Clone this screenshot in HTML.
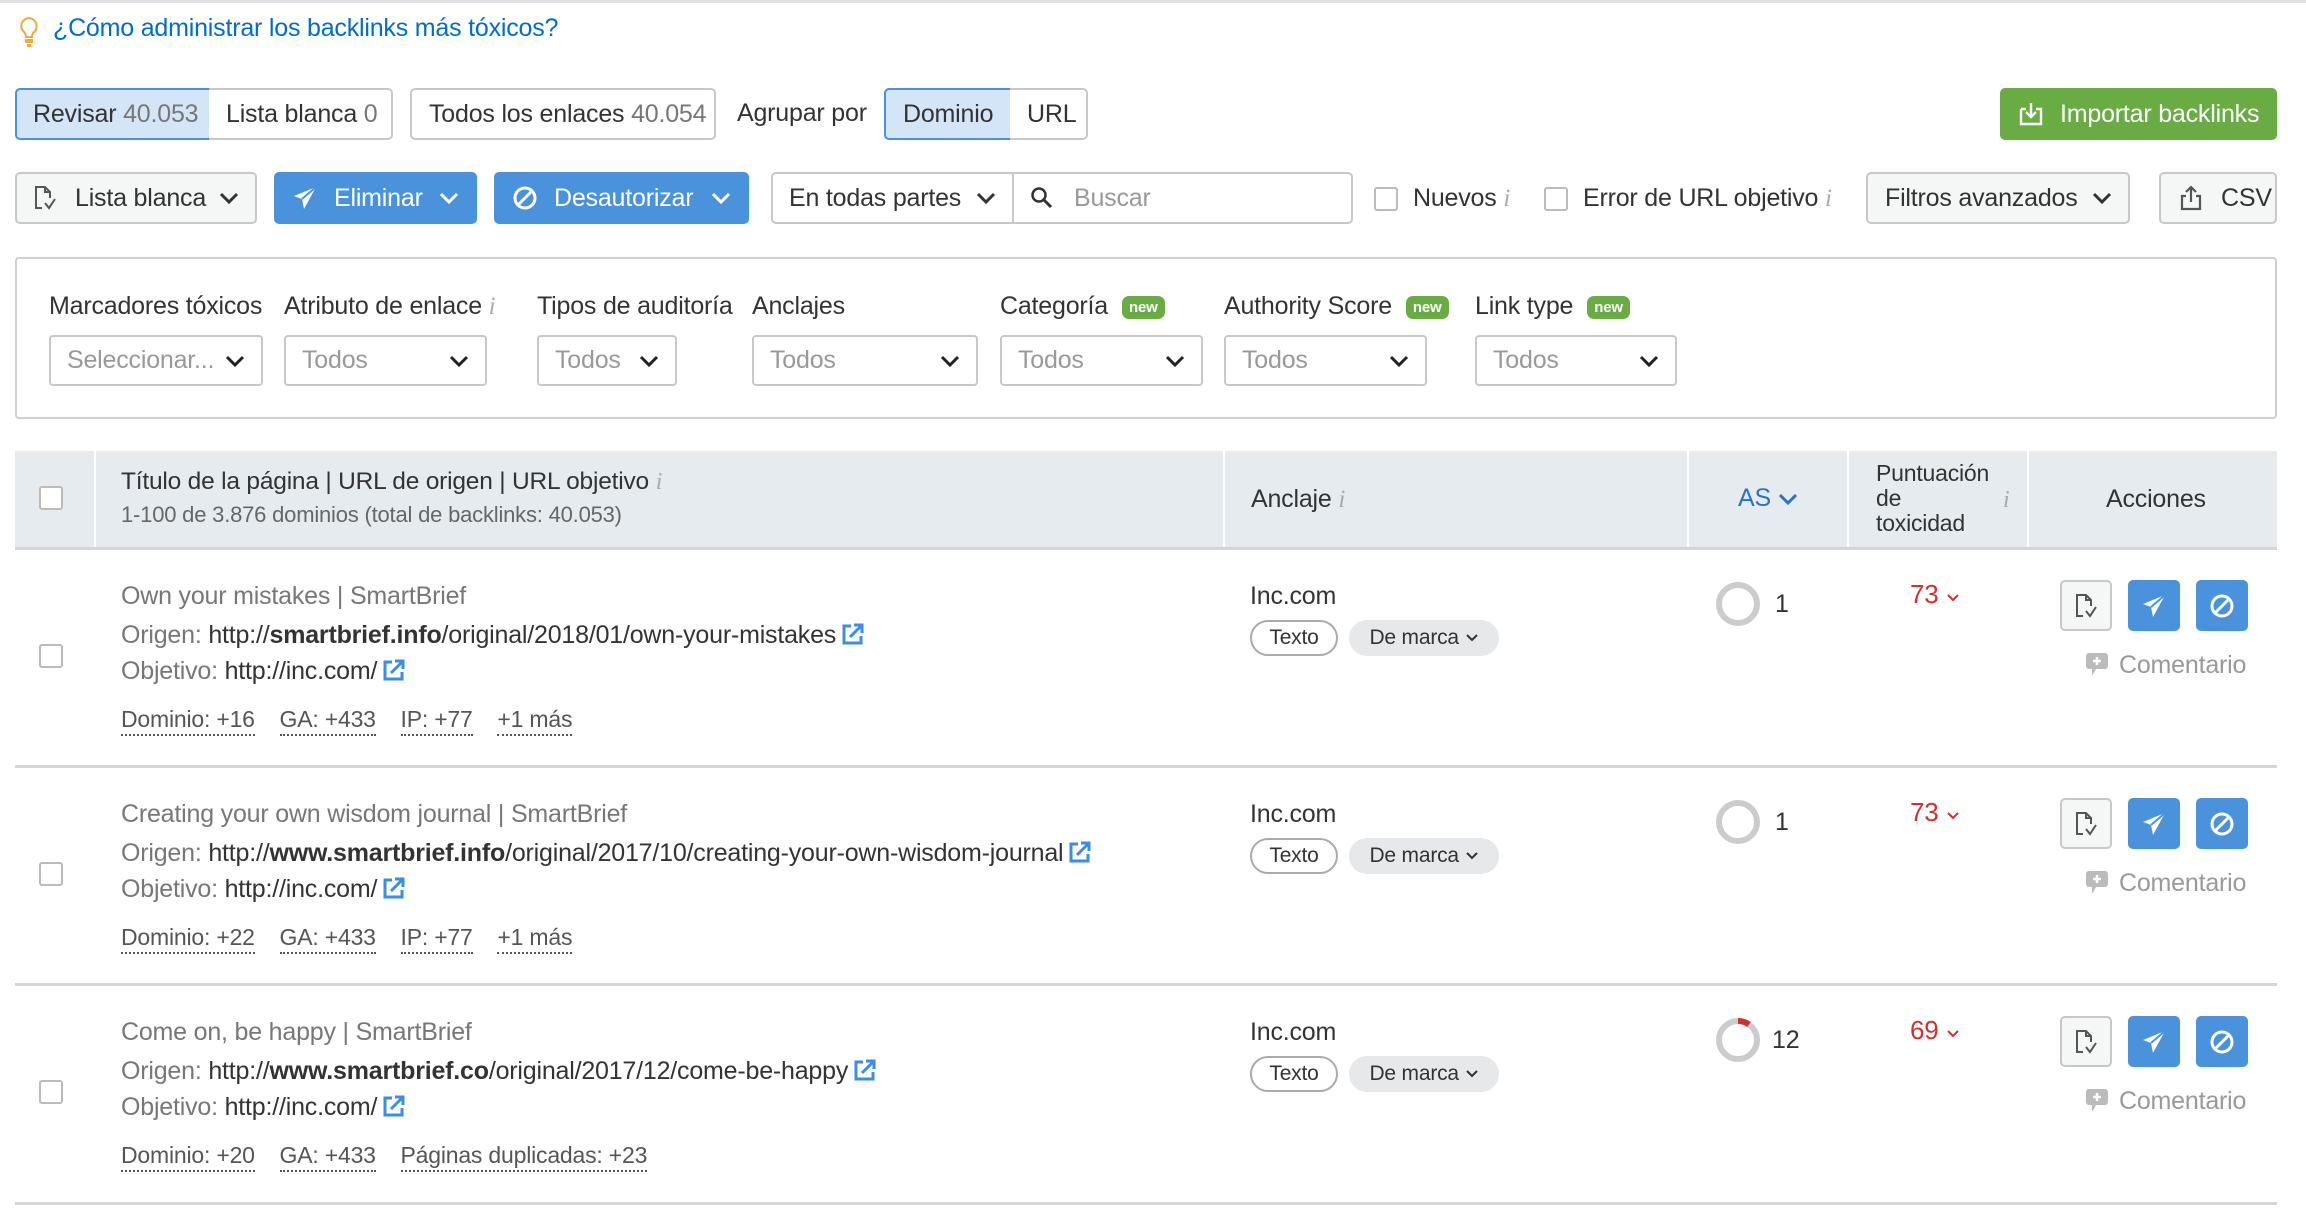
<!DOCTYPE html>
<html><head><meta charset="utf-8"><style>
*{box-sizing:border-box;margin:0;padding:0}
body{width:2306px;height:1210px;background:#fff;font-family:"Liberation Sans",sans-serif;color:#333;font-size:24px;position:relative;overflow:hidden;letter-spacing:-0.2px}
.a{position:absolute;white-space:nowrap}
.btn{position:absolute;border:2px solid #c8c8c8;border-radius:5px;background:#f5f6f6;display:flex;align-items:center;font-size:25px;color:#333}
.blue{background:#4a93dc;border-color:#4a93dc;color:#fff}
.sel{position:absolute;border:2px solid #c8c8c8;border-radius:4px;background:#fff;height:51px;display:flex;align-items:center;padding-left:16px;color:#999;font-size:25px}
.chev{position:absolute;right:16px;top:50%;margin-top:-7px}
.lbl{position:absolute;font-size:25px;color:#333}
.new{display:inline-block;background:#6aac44;color:#fff;font-size:15px;border-radius:7px;padding:3px 7px;vertical-align:middle;margin-left:14px;font-weight:bold}
.cb{position:absolute;width:24px;height:24px;border:2px solid #bbb;border-radius:3px;background:#fff}
.hdr{position:absolute;top:451px;height:98px;background:#e5ebef}
.g{color:#777}
.dot{border-bottom:2px dotted #555;padding-bottom:2px}
.sep{position:absolute;left:15px;width:2262px;height:3px;background:#d6d6d6}
.pill{position:absolute;height:36px;border-radius:18px;font-size:21px;display:flex;align-items:center;justify-content:center}
.ab{position:absolute;width:52px;height:51px;border-radius:5px;display:flex;align-items:center;justify-content:center}
.row{font-size:25px}
.ext{display:inline-block;vertical-align:-2px;margin-left:6px}
</style></head><body>
<div class="a" style="left:0;top:0;width:2306px;height:3px;background:#e2e2e6"></div>
<svg class="a" style="left:18px;top:16px" width="22" height="32" viewBox="0 0 22 32"><path d="M11 2a8 8 0 0 0-5 14c1 1 2 3 2 5h6c0-2 1-4 2-5A8 8 0 0 0 11 2z" fill="none" stroke="#f2a93b" stroke-width="2"/><rect x="7" y="23" width="8" height="4" fill="#f2a93b"/><rect x="9" y="28" width="4" height="3" fill="#f2a93b"/></svg>
<div class="a" style="left:53px;top:14px;font-size:25px;color:#006dca">¿Cómo administrar los backlinks más tóxicos?</div>

<div class="btn" style="left:15px;top:88px;width:196px;height:52px;background:#d3e5f7;border-color:#4a93dc;padding-left:16px;border-radius:5px 0 0 5px">Revisar&nbsp;<span class="g">40.053</span></div>
<div class="btn" style="left:209px;top:88px;width:184px;height:52px;background:#fff;padding-left:17px;border-radius:0 5px 5px 0;border-left:none">Lista blanca&nbsp;<span class="g">0</span></div>
<div class="btn" style="left:410px;top:88px;width:306px;height:52px;background:#fff;padding-left:17px">Todos los enlaces&nbsp;<span class="g">40.054</span></div>
<div class="a" style="left:737px;top:99px;font-size:25px">Agrupar por</div>
<div class="btn" style="left:884px;top:88px;width:128px;height:52px;background:#d3e5f7;border-color:#4a93dc;padding-left:17px;border-radius:5px 0 0 5px">Dominio</div>
<div class="btn" style="left:1010px;top:88px;width:78px;height:52px;background:#fff;padding-left:17px;border-radius:0 5px 5px 0;border-left:none">URL</div>
<div class="btn" style="left:2000px;top:88px;width:277px;height:52px;background:#6aac44;border-color:#6aac44;color:#fff;padding-left:16px"><svg width="26" height="26" viewBox="0 0 26 26" style="margin-right:16px"><path d="M3 8v15h20V8h-5M8 8H3" fill="none" stroke="#fff" stroke-width="2.4"/><path d="M13 2v14M8 11l5 5 5-5" fill="none" stroke="#fff" stroke-width="2.4"/></svg>Importar backlinks</div>

<div class="btn" style="left:15px;top:172px;width:242px;height:52px;padding-left:16px"><svg width="24" height="28" viewBox="0 0 24 28" style="margin-right:18px"><path d="M9 24H3V3h9l5 5v6M12 3v5h5M12 19l4 5 6-9" fill="none" stroke="#555" stroke-width="2"/></svg>Lista blanca<svg class="chev" width="20" height="14" viewBox="0 0 20 14"><path d="M2 3l8 8 8-8" fill="none" stroke="#333" stroke-width="3"/></svg></div>
<div class="btn blue" style="left:274px;top:172px;width:203px;height:52px;padding-left:16px"><svg width="26" height="26" viewBox="0 0 26 26" style="margin-right:16px"><path d="M24 2L2 11l8 3 2 10z" fill="#fff"/><path d="M24 2L10 14" stroke="#4a93dc" stroke-width="2"/></svg>Eliminar<svg class="chev" width="20" height="14" viewBox="0 0 20 14"><path d="M2 3l8 8 8-8" fill="none" stroke="#fff" stroke-width="3"/></svg></div>
<div class="btn blue" style="left:494px;top:172px;width:255px;height:52px;padding-left:16px"><svg width="26" height="26" viewBox="0 0 26 26" style="margin-right:16px"><circle cx="13" cy="13" r="10" fill="none" stroke="#fff" stroke-width="3"/><path d="M7 19L19 7" stroke="#fff" stroke-width="3"/></svg>Desautorizar<svg class="chev" width="20" height="14" viewBox="0 0 20 14"><path d="M2 3l8 8 8-8" fill="none" stroke="#fff" stroke-width="3"/></svg></div>
<div class="btn" style="left:771px;top:172px;width:243px;height:52px;background:#fff;padding-left:16px;border-radius:5px 0 0 5px">En todas partes<svg class="chev" width="20" height="14" viewBox="0 0 20 14"><path d="M2 3l8 8 8-8" fill="none" stroke="#333" stroke-width="3"/></svg></div>
<div class="btn" style="left:1012px;top:172px;width:341px;height:52px;background:#fff;padding-left:16px;border-radius:0 5px 5px 0;color:#999"><svg width="24" height="24" viewBox="0 0 24 24" style="margin-right:20px"><circle cx="9" cy="9" r="6.5" fill="none" stroke="#333" stroke-width="2.5"/><path d="M14 14l7 7" stroke="#333" stroke-width="3"/></svg>Buscar</div>
<div class="cb" style="left:1374px;top:187px"></div>
<div class="a" style="left:1413px;top:184px;font-size:25px">Nuevos <i style="color:#aaa;font-family:'Liberation Serif'">i</i></div>
<div class="cb" style="left:1544px;top:187px"></div>
<div class="a" style="left:1583px;top:184px;font-size:25px">Error de URL objetivo <i style="color:#aaa;font-family:'Liberation Serif'">i</i></div>
<div class="btn" style="left:1866px;top:172px;width:264px;height:52px;padding-left:17px">Filtros avanzados<svg class="chev" width="20" height="14" viewBox="0 0 20 14"><path d="M2 3l8 8 8-8" fill="none" stroke="#333" stroke-width="3"/></svg></div>
<div class="btn" style="left:2159px;top:172px;width:118px;height:52px;padding-left:18px"><svg width="24" height="28" viewBox="0 0 24 28" style="margin-right:18px"><path d="M7 12H3v13h18V12h-4M12 3v15M7 8l5-5 5 5" fill="none" stroke="#555" stroke-width="2.2"/></svg>CSV</div>

<div class="a" style="left:15px;top:257px;width:2262px;height:162px;border:2px solid #d0d0d0;border-radius:4px"></div>
<div class="lbl" style="left:49px;top:292px">Marcadores tóxicos</div>
<div class="lbl" style="left:284px;top:292px">Atributo de enlace <i style="color:#aaa;font-family:'Liberation Serif'">i</i></div>
<div class="lbl" style="left:537px;top:292px">Tipos de auditoría</div>
<div class="lbl" style="left:752px;top:292px">Anclajes</div>
<div class="lbl" style="left:1000px;top:292px">Categoría<span class="new">new</span></div>
<div class="lbl" style="left:1224px;top:292px">Authority Score<span class="new">new</span></div>
<div class="lbl" style="left:1475px;top:292px">Link type<span class="new">new</span></div>
<div class="sel" style="left:49px;top:335px;width:214px">Seleccionar...<svg class="chev" width="20" height="14" viewBox="0 0 20 14"><path d="M2 3l8 8 8-8" fill="none" stroke="#222" stroke-width="3"/></svg></div>
<div class="sel" style="left:284px;top:335px;width:203px">Todos<svg class="chev" width="20" height="14" viewBox="0 0 20 14"><path d="M2 3l8 8 8-8" fill="none" stroke="#222" stroke-width="3"/></svg></div>
<div class="sel" style="left:537px;top:335px;width:140px">Todos<svg class="chev" width="20" height="14" viewBox="0 0 20 14"><path d="M2 3l8 8 8-8" fill="none" stroke="#222" stroke-width="3"/></svg></div>
<div class="sel" style="left:752px;top:335px;width:226px">Todos<svg class="chev" width="20" height="14" viewBox="0 0 20 14"><path d="M2 3l8 8 8-8" fill="none" stroke="#222" stroke-width="3"/></svg></div>
<div class="sel" style="left:1000px;top:335px;width:203px">Todos<svg class="chev" width="20" height="14" viewBox="0 0 20 14"><path d="M2 3l8 8 8-8" fill="none" stroke="#222" stroke-width="3"/></svg></div>
<div class="sel" style="left:1224px;top:335px;width:203px">Todos<svg class="chev" width="20" height="14" viewBox="0 0 20 14"><path d="M2 3l8 8 8-8" fill="none" stroke="#222" stroke-width="3"/></svg></div>
<div class="sel" style="left:1475px;top:335px;width:202px">Todos<svg class="chev" width="20" height="14" viewBox="0 0 20 14"><path d="M2 3l8 8 8-8" fill="none" stroke="#222" stroke-width="3"/></svg></div>

<div class="hdr" style="left:15px;width:79px"></div>
<div class="hdr" style="left:96px;width:1127px"></div>
<div class="hdr" style="left:1225px;width:462px"></div>
<div class="hdr" style="left:1689px;width:158px"></div>
<div class="hdr" style="left:1849px;width:178px"></div>
<div class="hdr" style="left:2029px;width:248px"></div>
<div class="a" style="left:15px;top:547px;width:2262px;height:3px;background:#d2d6d9"></div>
<div class="cb" style="left:39px;top:486px"></div>
<div class="a" style="left:121px;top:468px;font-size:24.5px">Título de la página | URL de origen | URL objetivo <i style="color:#aaa;font-family:'Liberation Serif'">i</i></div>
<div class="a" style="left:121px;top:502px;font-size:22px;color:#666">1-100 de 3.876 dominios (total de backlinks: 40.053)</div>
<div class="a" style="left:1251px;top:485px;font-size:25px">Anclaje <i style="color:#aaa;font-family:'Liberation Serif'">i</i></div>
<div class="a" style="left:1738px;top:484px;color:#2a72c4;font-size:25px">AS <svg width="20" height="13" viewBox="0 0 20 13"><path d="M2 2l8 8 8-8" fill="none" stroke="#2a72c4" stroke-width="3"/></svg></div>
<div class="a" style="left:1876px;top:461px;line-height:25px;font-size:23px">Puntuación<br>de<br>toxicidad</div>
<i class="a" style="left:2003px;top:487px;color:#aaa;font-family:'Liberation Serif'">i</i>
<div class="a" style="left:2106px;top:485px;font-size:25px">Acciones</div>

<div class="sep" style="top:765px"></div>
<div class="sep" style="top:983px"></div>
<div class="sep" style="top:1202px"></div>

<div class="row">
<div class="cb" style="left:39px;top:644px"></div>
<div class="a g" style="left:121px;top:582px">Own your mistakes | SmartBrief</div>
<div class="a" style="left:121px;top:621px"><span class="g">Origen:</span> http://<b>smartbrief.info</b>/original/2018/01/own-your-mistakes<svg class="ext" width="22" height="22" viewBox="0 0 22 22"><path d="M9 3H2v17h17v-7" fill="none" stroke="#3a8ee6" stroke-width="3"/><path d="M8 14L19 3M12 2h8v8" fill="none" stroke="#3a8ee6" stroke-width="3"/></svg></div>
<div class="a" style="left:121px;top:657px"><span class="g">Objetivo:</span> http://inc.com/<svg class="ext" width="22" height="22" viewBox="0 0 22 22"><path d="M9 3H2v17h17v-7" fill="none" stroke="#3a8ee6" stroke-width="3"/><path d="M8 14L19 3M12 2h8v8" fill="none" stroke="#3a8ee6" stroke-width="3"/></svg></div>
<div class="a" style="left:121px;top:706px;font-size:23px;color:#555"><span class="dot">Dominio: +16</span>&nbsp;&nbsp;&nbsp;&nbsp;<span class="dot">GA: +433</span>&nbsp;&nbsp;&nbsp;&nbsp;<span class="dot">IP: +77</span>&nbsp;&nbsp;&nbsp;&nbsp;<span class="dot">+1 más</span></div>

<div class="cb" style="left:39px;top:862px"></div>
<div class="a g" style="left:121px;top:800px">Creating your own wisdom journal | SmartBrief</div>
<div class="a" style="left:121px;top:839px"><span class="g">Origen:</span> http://<b>www.smartbrief.info</b>/original/2017/10/creating-your-own-wisdom-journal<svg class="ext" width="22" height="22" viewBox="0 0 22 22"><path d="M9 3H2v17h17v-7" fill="none" stroke="#3a8ee6" stroke-width="3"/><path d="M8 14L19 3M12 2h8v8" fill="none" stroke="#3a8ee6" stroke-width="3"/></svg></div>
<div class="a" style="left:121px;top:875px"><span class="g">Objetivo:</span> http://inc.com/<svg class="ext" width="22" height="22" viewBox="0 0 22 22"><path d="M9 3H2v17h17v-7" fill="none" stroke="#3a8ee6" stroke-width="3"/><path d="M8 14L19 3M12 2h8v8" fill="none" stroke="#3a8ee6" stroke-width="3"/></svg></div>
<div class="a" style="left:121px;top:924px;font-size:23px;color:#555"><span class="dot">Dominio: +22</span>&nbsp;&nbsp;&nbsp;&nbsp;<span class="dot">GA: +433</span>&nbsp;&nbsp;&nbsp;&nbsp;<span class="dot">IP: +77</span>&nbsp;&nbsp;&nbsp;&nbsp;<span class="dot">+1 más</span></div>

<div class="cb" style="left:39px;top:1080px"></div>
<div class="a g" style="left:121px;top:1018px">Come on, be happy | SmartBrief</div>
<div class="a" style="left:121px;top:1057px"><span class="g">Origen:</span> http://<b>www.smartbrief.co</b>/original/2017/12/come-be-happy<svg class="ext" width="22" height="22" viewBox="0 0 22 22"><path d="M9 3H2v17h17v-7" fill="none" stroke="#3a8ee6" stroke-width="3"/><path d="M8 14L19 3M12 2h8v8" fill="none" stroke="#3a8ee6" stroke-width="3"/></svg></div>
<div class="a" style="left:121px;top:1093px"><span class="g">Objetivo:</span> http://inc.com/<svg class="ext" width="22" height="22" viewBox="0 0 22 22"><path d="M9 3H2v17h17v-7" fill="none" stroke="#3a8ee6" stroke-width="3"/><path d="M8 14L19 3M12 2h8v8" fill="none" stroke="#3a8ee6" stroke-width="3"/></svg></div>
<div class="a" style="left:121px;top:1142px;font-size:23px;color:#555"><span class="dot">Dominio: +20</span>&nbsp;&nbsp;&nbsp;&nbsp;<span class="dot">GA: +433</span>&nbsp;&nbsp;&nbsp;&nbsp;<span class="dot">Páginas duplicadas: +23</span></div>

<div class="a" style="left:1250px;top:582px">Inc.com</div>
<div class="pill" style="left:1250px;top:620px;width:88px;border:2px solid #aaa">Texto</div>
<div class="pill" style="left:1349px;top:620px;width:150px;background:#e6e8ea">De marca&nbsp;<svg width="14" height="10" viewBox="0 0 14 10"><path d="M2 2l5 5 5-5" fill="none" stroke="#333" stroke-width="2"/></svg></div>
<svg class="a" style="left:1715px;top:581px" width="46" height="46"><circle cx="23" cy="23" r="19" fill="none" stroke="#ccc" stroke-width="6"/></svg>
<div class="a" style="left:1775px;top:590px">1</div>
<div class="a" style="left:1910px;top:579px;color:#d1302f;font-size:26px">73 <svg width="14" height="10" viewBox="0 0 14 10"><path d="M2 2l5 5 5-5" fill="none" stroke="#d1302f" stroke-width="2"/></svg></div>

<div class="a" style="left:1250px;top:800px">Inc.com</div>
<div class="pill" style="left:1250px;top:838px;width:88px;border:2px solid #aaa">Texto</div>
<div class="pill" style="left:1349px;top:838px;width:150px;background:#e6e8ea">De marca&nbsp;<svg width="14" height="10" viewBox="0 0 14 10"><path d="M2 2l5 5 5-5" fill="none" stroke="#333" stroke-width="2"/></svg></div>
<svg class="a" style="left:1715px;top:799px" width="46" height="46"><circle cx="23" cy="23" r="19" fill="none" stroke="#ccc" stroke-width="6"/></svg>
<div class="a" style="left:1775px;top:808px">1</div>
<div class="a" style="left:1910px;top:797px;color:#d1302f;font-size:26px">73 <svg width="14" height="10" viewBox="0 0 14 10"><path d="M2 2l5 5 5-5" fill="none" stroke="#d1302f" stroke-width="2"/></svg></div>

<div class="a" style="left:1250px;top:1018px">Inc.com</div>
<div class="pill" style="left:1250px;top:1056px;width:88px;border:2px solid #aaa">Texto</div>
<div class="pill" style="left:1349px;top:1056px;width:150px;background:#e6e8ea">De marca&nbsp;<svg width="14" height="10" viewBox="0 0 14 10"><path d="M2 2l5 5 5-5" fill="none" stroke="#333" stroke-width="2"/></svg></div>
<svg class="a" style="left:1715px;top:1017px" width="46" height="46"><circle cx="23" cy="23" r="19" fill="none" stroke="#ccc" stroke-width="6"/><path d="M23 4a19 19 0 0 1 11 3.5" fill="none" stroke="#d1302f" stroke-width="6"/></svg>
<div class="a" style="left:1772px;top:1026px">12</div>
<div class="a" style="left:1910px;top:1015px;color:#d1302f;font-size:26px">69 <svg width="14" height="10" viewBox="0 0 14 10"><path d="M2 2l5 5 5-5" fill="none" stroke="#d1302f" stroke-width="2"/></svg></div>
</div>

<div class="ab" style="left:2060px;top:580px;border:2px solid #c8c8c8;background:#f5f6f6"><svg width="24" height="28" viewBox="0 0 24 28"><path d="M9 24H3V3h9l5 5v6M12 3v5h5M12 19l4 5 6-9" fill="none" stroke="#555" stroke-width="2"/></svg></div>
<div class="ab" style="left:2128px;top:580px;background:#4a93dc"><svg width="26" height="26" viewBox="0 0 26 26"><path d="M24 2L2 11l8 3 2 10z" fill="#fff"/><path d="M24 2L10 14" stroke="#4a93dc" stroke-width="2"/></svg></div>
<div class="ab" style="left:2196px;top:580px;background:#4a93dc"><svg width="26" height="26" viewBox="0 0 26 26"><circle cx="13" cy="13" r="10" fill="none" stroke="#fff" stroke-width="3"/><path d="M7 19L19 7" stroke="#fff" stroke-width="3"/></svg></div>
<div class="a" style="left:2085px;top:651px;color:#999;font-size:25px"><svg width="24" height="28" viewBox="0 0 24 28" style="vertical-align:-6px;margin-right:10px"><path d="M4 2h16a3 3 0 0 1 3 3v10a3 3 0 0 1-3 3H11l-4 7v-7H4a3 3 0 0 1-3-3V5a3 3 0 0 1 3-3z" fill="#bbb"/><path d="M12 6v8M8 10h8" stroke="#fff" stroke-width="2.5"/></svg>Comentario</div>

<div class="ab" style="left:2060px;top:798px;border:2px solid #c8c8c8;background:#f5f6f6"><svg width="24" height="28" viewBox="0 0 24 28"><path d="M9 24H3V3h9l5 5v6M12 3v5h5M12 19l4 5 6-9" fill="none" stroke="#555" stroke-width="2"/></svg></div>
<div class="ab" style="left:2128px;top:798px;background:#4a93dc"><svg width="26" height="26" viewBox="0 0 26 26"><path d="M24 2L2 11l8 3 2 10z" fill="#fff"/><path d="M24 2L10 14" stroke="#4a93dc" stroke-width="2"/></svg></div>
<div class="ab" style="left:2196px;top:798px;background:#4a93dc"><svg width="26" height="26" viewBox="0 0 26 26"><circle cx="13" cy="13" r="10" fill="none" stroke="#fff" stroke-width="3"/><path d="M7 19L19 7" stroke="#fff" stroke-width="3"/></svg></div>
<div class="a" style="left:2085px;top:869px;color:#999;font-size:25px"><svg width="24" height="28" viewBox="0 0 24 28" style="vertical-align:-6px;margin-right:10px"><path d="M4 2h16a3 3 0 0 1 3 3v10a3 3 0 0 1-3 3H11l-4 7v-7H4a3 3 0 0 1-3-3V5a3 3 0 0 1 3-3z" fill="#bbb"/><path d="M12 6v8M8 10h8" stroke="#fff" stroke-width="2.5"/></svg>Comentario</div>

<div class="ab" style="left:2060px;top:1016px;border:2px solid #c8c8c8;background:#f5f6f6"><svg width="24" height="28" viewBox="0 0 24 28"><path d="M9 24H3V3h9l5 5v6M12 3v5h5M12 19l4 5 6-9" fill="none" stroke="#555" stroke-width="2"/></svg></div>
<div class="ab" style="left:2128px;top:1016px;background:#4a93dc"><svg width="26" height="26" viewBox="0 0 26 26"><path d="M24 2L2 11l8 3 2 10z" fill="#fff"/><path d="M24 2L10 14" stroke="#4a93dc" stroke-width="2"/></svg></div>
<div class="ab" style="left:2196px;top:1016px;background:#4a93dc"><svg width="26" height="26" viewBox="0 0 26 26"><circle cx="13" cy="13" r="10" fill="none" stroke="#fff" stroke-width="3"/><path d="M7 19L19 7" stroke="#fff" stroke-width="3"/></svg></div>
<div class="a" style="left:2085px;top:1087px;color:#999;font-size:25px"><svg width="24" height="28" viewBox="0 0 24 28" style="vertical-align:-6px;margin-right:10px"><path d="M4 2h16a3 3 0 0 1 3 3v10a3 3 0 0 1-3 3H11l-4 7v-7H4a3 3 0 0 1-3-3V5a3 3 0 0 1 3-3z" fill="#bbb"/><path d="M12 6v8M8 10h8" stroke="#fff" stroke-width="2.5"/></svg>Comentario</div>
</body></html>
